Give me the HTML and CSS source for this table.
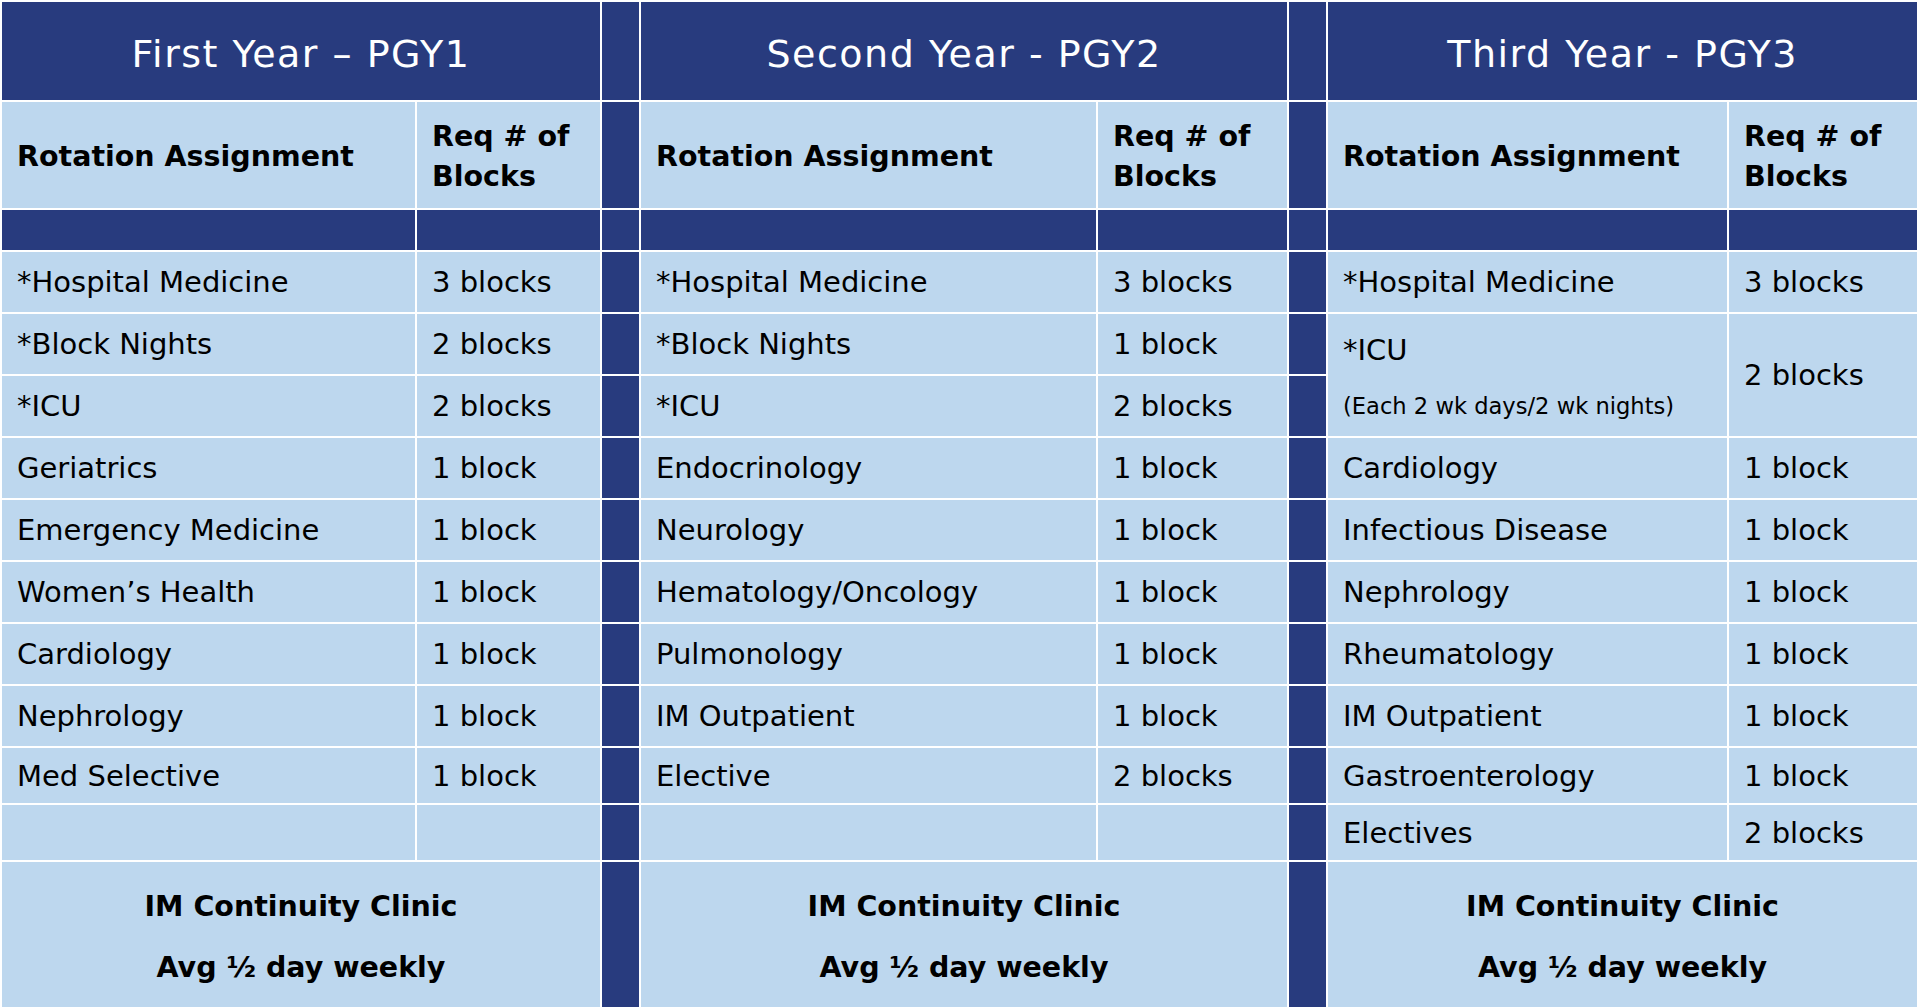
FILE: index.html
```html
<!DOCTYPE html>
<html lang="en">
<head>
<meta charset="utf-8">
<title>Residency Rotation Schedule</title>
<link rel="stylesheet" href="styles.css">
</head>
<body>
<table class="plan">
  <colgroup>
    <col class="c-rot1"><col class="c-req1"><col class="c-sep">
    <col class="c-rot2"><col class="c-req2"><col class="c-sep">
    <col class="c-rot3"><col class="c-req3">
  </colgroup>
  <thead>
    <tr class="r-title">
      <th colspan="2" class="title">First Year – PGY1</th>
      <td class="sep"></td>
      <th colspan="2" class="title">Second Year - PGY2</th>
      <td class="sep"></td>
      <th colspan="2" class="title">Third Year - PGY3</th>
    </tr>
    <tr class="r-head">
      <th class="hd">Rotation Assignment</th><th class="hd">Req # of Blocks</th>
      <td class="sep"></td>
      <th class="hd">Rotation Assignment</th><th class="hd">Req # of Blocks</th>
      <td class="sep"></td>
      <th class="hd">Rotation Assignment</th><th class="hd">Req # of Blocks</th>
    </tr>
    <tr class="r-bar">
      <td class="dark"></td><td class="dark"></td><td class="sep"></td>
      <td class="dark"></td><td class="dark"></td><td class="sep"></td>
      <td class="dark"></td><td class="dark"></td>
    </tr>
  </thead>
  <tbody>
    <tr>
      <td>*Hospital Medicine</td><td>3 blocks</td><td class="sep"></td>
      <td>*Hospital Medicine</td><td>3 blocks</td><td class="sep"></td>
      <td>*Hospital Medicine</td><td>3 blocks</td>
    </tr>
    <tr>
      <td>*Block Nights</td><td>2 blocks</td><td class="sep"></td>
      <td>*Block Nights</td><td>1 block</td><td class="sep"></td>
      <td rowspan="2" class="icu"><div class="icu-main">*ICU</div><div class="icu-note">(Each 2 wk days/2 wk nights)</div></td>
      <td rowspan="2">2 blocks</td>
    </tr>
    <tr>
      <td>*ICU</td><td>2 blocks</td><td class="sep"></td>
      <td>*ICU</td><td>2 blocks</td><td class="sep"></td>
    </tr>
    <tr>
      <td>Geriatrics</td><td>1 block</td><td class="sep"></td>
      <td>Endocrinology</td><td>1 block</td><td class="sep"></td>
      <td>Cardiology</td><td>1 block</td>
    </tr>
    <tr>
      <td>Emergency Medicine</td><td>1 block</td><td class="sep"></td>
      <td>Neurology</td><td>1 block</td><td class="sep"></td>
      <td>Infectious Disease</td><td>1 block</td>
    </tr>
    <tr>
      <td>Women’s Health</td><td>1 block</td><td class="sep"></td>
      <td>Hematology/Oncology</td><td>1 block</td><td class="sep"></td>
      <td>Nephrology</td><td>1 block</td>
    </tr>
    <tr>
      <td>Cardiology</td><td>1 block</td><td class="sep"></td>
      <td>Pulmonology</td><td>1 block</td><td class="sep"></td>
      <td>Rheumatology</td><td>1 block</td>
    </tr>
    <tr>
      <td>Nephrology</td><td>1 block</td><td class="sep"></td>
      <td>IM Outpatient</td><td>1 block</td><td class="sep"></td>
      <td>IM Outpatient</td><td>1 block</td>
    </tr>
    <tr class="r-short">
      <td>Med Selective</td><td>1 block</td><td class="sep"></td>
      <td>Elective</td><td>2 blocks</td><td class="sep"></td>
      <td>Gastroenterology</td><td>1 block</td>
    </tr>
    <tr class="r-short">
      <td></td><td></td><td class="sep"></td>
      <td></td><td></td><td class="sep"></td>
      <td>Electives</td><td>2 blocks</td>
    </tr>
  </tbody>
  <tfoot>
    <tr class="r-foot">
      <td colspan="2" class="foot">IM Continuity Clinic<br>Avg ½ day weekly</td>
      <td class="sep"></td>
      <td colspan="2" class="foot">IM Continuity Clinic<br>Avg ½ day weekly</td>
      <td class="sep"></td>
      <td colspan="2" class="foot">IM Continuity Clinic<br>Avg ½ day weekly</td>
    </tr>
  </tfoot>
</table>
</body>
</html>
```
FILE: styles.css
```css
html, body {
  margin: 0;
  padding: 0;
  background: #ffffff;
}

body {
  font-family: "DejaVu Sans", Verdana, sans-serif;
  color: #000000;
}

.plan {
  table-layout: fixed;
  width: 1919px;
  border-collapse: separate;
  border-spacing: 2px;
  background: #ffffff;
}

.c-rot1 { width: 413px; }
.c-req1 { width: 183px; }
.c-sep  { width: 37px; }
.c-rot2 { width: 455px; }
.c-req2 { width: 189px; }
.c-rot3 { width: 399px; }
.c-req3 { width: 188px; }

.plan th,
.plan td {
  padding: 0 15px;
  background: #bdd7ee;
  font-size: 29px;
  font-weight: normal;
  text-align: left;
  vertical-align: middle;
  white-space: normal;
}

.plan td.sep,
.plan td.dark {
  background: #283b7e;
  padding: 0;
}

.plan th.title {
  background: #283b7e;
  color: #ffffff;
  font-size: 38px;
  letter-spacing: 1.5px;
  text-align: center;
  height: 98px;
  padding-top: 6px;
  box-sizing: border-box;
}

.r-head th,
.r-head td {
  height: 106px;
  box-sizing: border-box;
}

.plan th.hd {
  font-weight: bold;
  font-size: 28.5px;
  line-height: 40px;
  padding-top: 4px;
}

.r-bar td {
  height: 40px;
}

.plan tbody td {
  height: 60px;
}

.plan tbody tr.r-short td {
  height: 55px;
}

.plan td.icu {
  padding-top: 6px;
}

.icu-main {
  line-height: 56px;
}

.icu-note {
  font-size: 22.6px;
  line-height: 56px;
}

.plan tfoot td {
  height: 142px;
}

.plan td.foot {
  font-weight: bold;
  font-size: 28.5px;
  line-height: 61px;
  text-align: center;
  padding-top: 4px;
}
```
